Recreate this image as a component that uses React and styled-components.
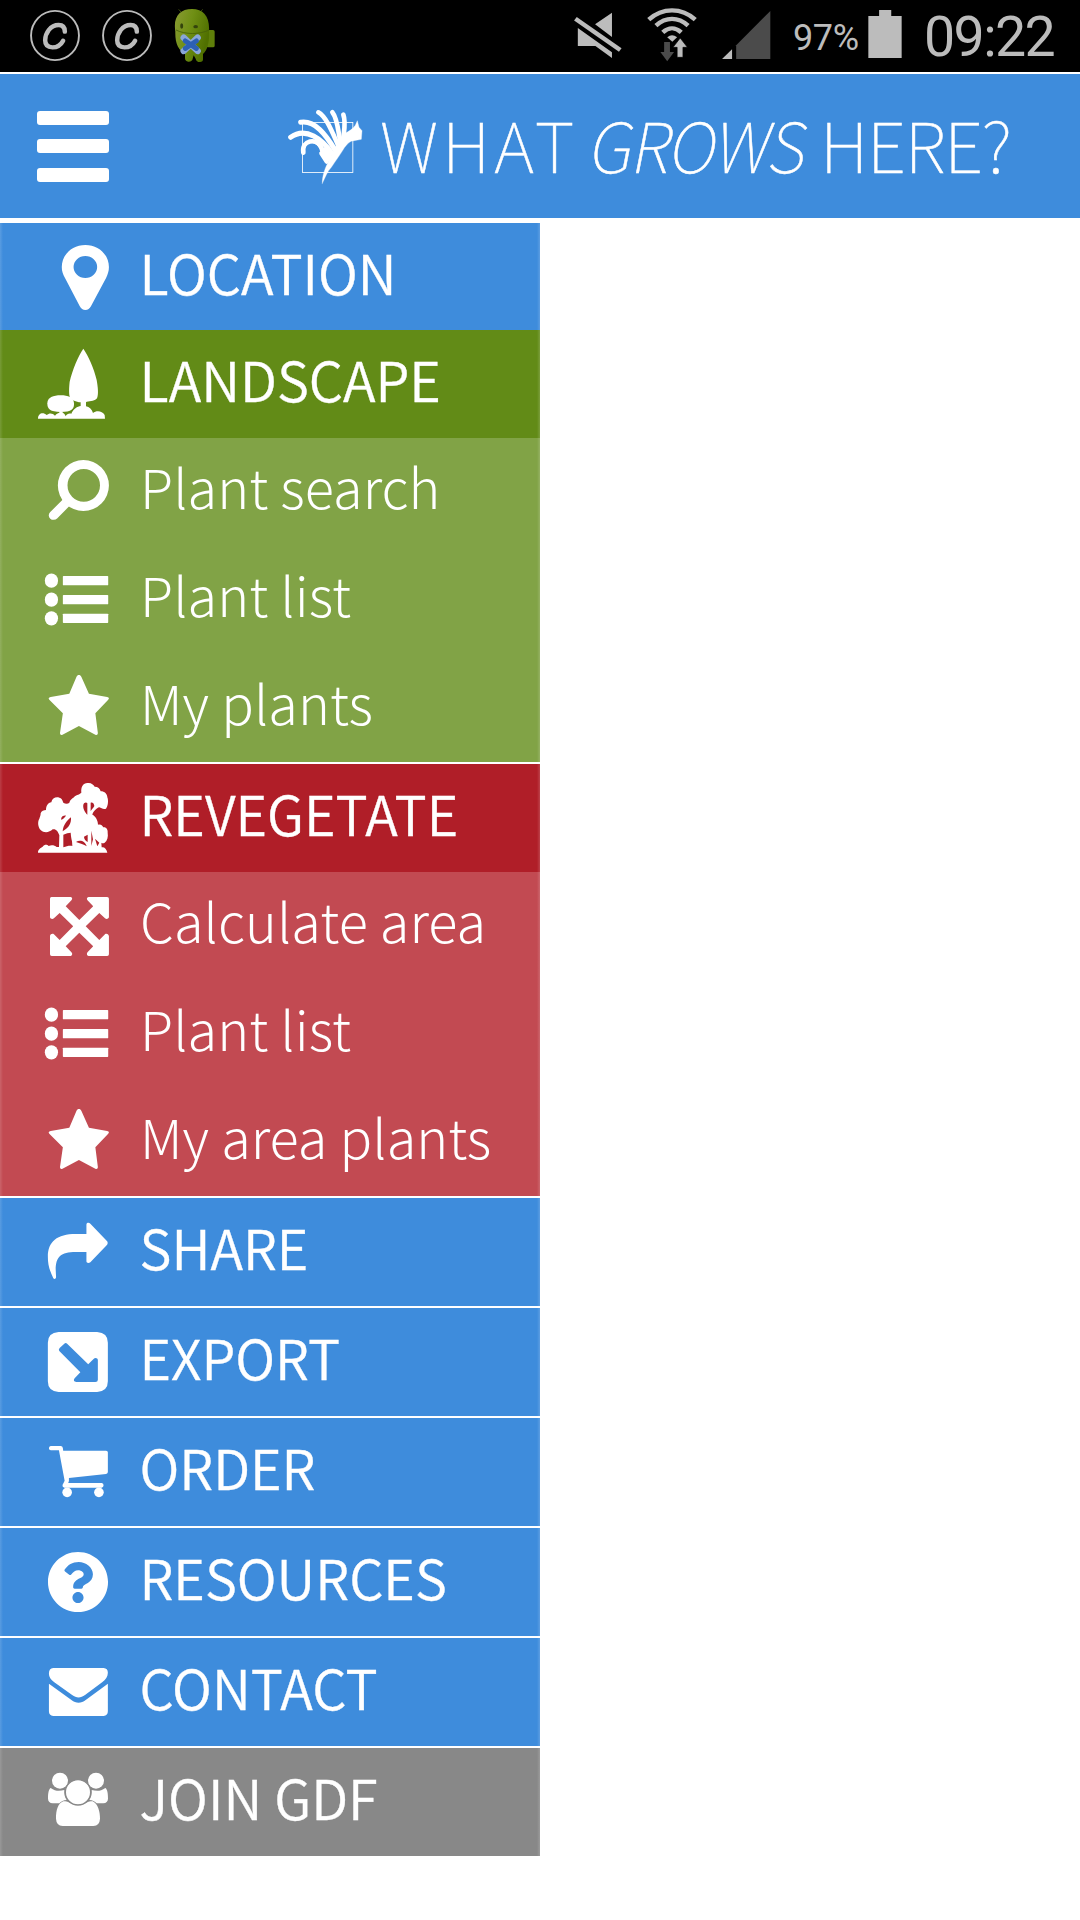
import React from 'react';
import styled, { createGlobalStyle, css } from 'styled-components';
import { FaQuestionCircle } from 'react-icons/fa';

const color = {
  blue: '#3e8cdc',
  green: '#628b17',
  greenSoft: '#81a346',
  red: '#b01e28',
  redSoft: '#c24a52',
  grey: '#888888',
  status: '#bcbcbc',
  statusDim: '#4b4b4b',
};

const GlobalStyle = createGlobalStyle`
  * { box-sizing: border-box; }
  body { margin: 0; background: #fff; }
  svg { display: block; flex: none; }
`;

const Screen = styled.div`
  width: 1080px;
  height: 1920px;
  overflow: hidden;
  background: #fff;
  font-family: "Noto Sans CJK JP", "Noto Sans", sans-serif;
`;

const StatusBar = styled.div`
  display: flex;
  justify-content: space-between;
  height: 72px;
  padding: 0 25px 0 30px;
  background: #000;
  color: ${color.status};
  font-family: Roboto, sans-serif;
`;

const StatusGroup = styled.div`
  display: flex;
  gap: ${p => p.$gap}px;
`;

const StatusIcon = styled.svg`
  width: ${p => p.$width}px;
  height: 72px;
`;

const BatteryLevel = styled.span`
  width: 68px;
  line-height: 77px;
  font-size: 36px;
  letter-spacing: -0.4px;
`;

const Clock = styled.span`
  width: 131px;
  font-size: 55.5px;
  font-weight: 400;
  line-height: 75px;
  letter-spacing: -1.6px;
  white-space: nowrap;
`;

const Header = styled.header`
  display: flex;
  align-items: center;
  height: 144px;
  margin: 2px 0 5px;
  padding-left: 37px;
  background: ${color.blue};
  color: #fff;
`;

const MenuButton = styled.button`
  display: flex;
  flex-direction: column;
  justify-content: space-between;
  width: 72px;
  height: 71px;
  margin: 0 177px 0 0;
  padding: 0;
  border: 0;
  background: none;
`;

const MenuBar = styled.span`
  height: 14px;
  border-radius: 3px;
  background: #fff;
`;

const Brand = styled.h1`
  display: flex;
  margin: 0;
  padding-bottom: 6px;
  font-size: 69px;
  font-weight: 100;
  line-height: 138px;
  white-space: nowrap;
`;

const Word = styled.span`
  width: ${p => p.$width}px;
  letter-spacing: ${p => p.$tracking}px;
  -webkit-text-stroke: 0.5px #fff;
  ${p => p.$slanted && css`
    transform: skewX(-11deg) scaleX(0.955);
    transform-origin: 0 70%;
  `}
`;

const Logo = styled.svg`
  width: 84px;
  height: 80px;
  margin-right: 10px;
`;

const Menu = styled.nav`
  width: 540px;
`;

const Row = styled.div`
  display: flex;
  height: ${p => p.$height || 108}px;
  margin-bottom: ${p => (p.$divided ? 2 : 0)}px;
  background:
    linear-gradient(90deg, rgba(255, 255, 255, 0.14), transparent 3px, transparent 537px, rgba(255, 255, 255, 0.16)),
    ${p => p.$color};
  color: #fff;
`;

const IconCell = styled.div`
  display: flex;
  justify-content: flex-end;
  align-items: center;
  width: 120px;
  height: 108px;
  padding-right: ${p => p.$inset || 0}px;
`;

const Drawing = styled.svg`
  width: 120px;
  height: 108px;
  fill: #fff;
  fill-rule: evenodd;
`;

const Label = styled.span`
  padding-left: ${p => (p.$light ? 20 : 19.5)}px;
  font-size: 54px;
  font-weight: ${p => (p.$light ? 300 : 350)};
  line-height: ${p => (p.$light ? 96 : 97)}px;
  letter-spacing: ${p => (p.$light ? 0.08 : 0)}px;
  -webkit-text-stroke: ${p => (p.$light ? 0 : 0.35)}px #fff;
  white-space: nowrap;
`;

/* Row icons share a 120x108 cell; `top` is the cell's origin in drawing units. */
function Glyph({ top, children }) {
  return (
    <Drawing viewBox={`0 ${top} 336 324`} preserveAspectRatio="none">{children}</Drawing>
  );
}

const PinIcon = () => (
  <Glyph top={24}>
    <path d="M239 90C276 90 305 119 305 156C305 168 302 178 297 189L255 273C251 281 246 285 239 285C232 285 227 281 223 273L182 189C176 178 173 168 173 156C173 119 202 90 239 90ZM239 123A33 33 0 1 0 239 189A33 33 0 1 0 239 123Z" />
  </Glyph>
);

const GardenIcon = () => (
  <Drawing viewBox="-60 -15 360 324">
    <path d="M190 41C205 62 222 100 230 135C234 158 236 178 231 190C226 197 212 199 200 200L198 202V214C208 216 216 224 219 234C228 226 246 226 254 240L255 251H54C54 236 68 230 80 240C88 233 98 234 105 242C110 235 116 234 118 233V230H128V233C134 236 136 240 137 244C140 236 148 234 154 236C160 222 172 214 182 213V202C168 200 155 196 150 188C146 178 147 158 149 140C157 105 175 62 190 41Z" />
    <path d="M82 205C82 188 100 181 122 181C145 181 160 188 162 204C163 222 155 231 122 231C90 231 82 222 82 205Z" />
  </Drawing>
);

const SearchIcon = () => (
  <Glyph top={669}>
    <path d="M162 811.5A71.5 76.5 0 1 1 305 811.5A71.5 76.5 0 1 1 162 811.5ZM189 811A45.5 49 0 1 0 280 811A45.5 49 0 1 0 189 811Z" />
    <path d="M150 901L190 858" stroke="#fff" strokeWidth="27" strokeLinecap="round" />
  </Glyph>
);

const ListIcon = () => (
  <Glyph top={18}>
    {[122, 179, 235].map(y => (
      <React.Fragment key={y}>
        <ellipse cx="144" cy={y} rx="18.5" ry="21.5" />
        <rect x="176" y={y - 14} width="127" height="28" rx="2" />
      </React.Fragment>
    ))}
  </Glyph>
);

const StarIcon = () => (
  <Glyph top={342}>
    <path d="M221 405C224 405 226 407 228 411L249 461L300 471C306 472 306 476 303 479L267 520L274 579C274 584 271 586 267 584L221 558L175 584C171 586 168 584 168 579L176 520L138 479C135 476 136 472 142 471L194 461L214 411C216 407 218 405 221 405Z" />
  </Glyph>
);

const ForestIcon = () => (
  <Drawing viewBox="-60 -18 360 324">
    <path d="M54 248C54 238 62 234 68 230C74 222 82 224 86 228C95 224 104 226 110 231L117 231L118 196C114 184 108 176 98 178C88 188 72 190 62 180C54 172 52 155 58 146C60 140 62 136 62 130C64 122 72 120 78 120C78 108 84 98 94 97C96 84 108 80 118 83C126 84 128 92 130 98C136 102 144 102 148 98C150 90 156 86 162 82C166 74 176 76 184 68C182 50 190 38 204 39C214 38 220 44 224 50C234 50 240 56 242 64C254 64 262 72 262 82C266 92 264 108 258 116C250 120 244 114 238 112C230 114 220 124 217 134C226 138 234 150 234 164C244 162 248 168 250 172C258 170 264 178 263 188C265 200 262 212 254 218C250 220 246 220 244 218L245 232C252 230 260 236 262 248Z
      M128 184C130 165 140 152 153 142C154 160 148 172 128 184Z
      M123 149C124 138 132 136 138 137C134 142 130 148 123 149Z
      M190 104C192 96 200 96 202 100L202 134C194 126 188 114 190 104Z
      M212 98C216 96 222 98 223 108C220 114 214 118 212 124Z
      M130 232L130 194C138 190 146 188 152 188C153 200 154 206 156 214L157 228C150 226 140 228 130 232Z
      M168 216C180 208 196 214 200 229C192 222 180 221 168 216Z
      M192 200L203 194L203 216C196 212 192 206 192 200Z
      M214 182L219 208L214 228Z
      M225 206L238 218L232 229Z" />
  </Drawing>
);

const ExpandIcon = () => (
  <Glyph top={36}>
    <path d="M144 111H198C203 112 203 117 200 121L184 139L222 180L261 139L245 121C242 117 243 112 248 111H300Q305 111 305 116V172C303 178 297 178 294 175L278 159L240 199L278 240L294 223C298 220 303 222 305 228V283Q305 288 300 288H248C243 287 242 281 245 277L261 259L222 218L184 259L200 277C204 281 202 287 198 288H145Q140 288 140 283V228C141 222 147 220 151 223L167 240L205 199L167 159L151 175C147 179 141 177 140 172V116Q140 111 144 111Z" />
  </Glyph>
);

const ShareIcon = () => (
  <Glyph top={24}>
    <path d="M242 104C242 98 249 97 253 101L300 154Q303 159 300 164L253 217C248 221 242 219 242 214V186H212C170 186 156 200 156 240L157 262C156 268 151 268 149 264C138 240 134 222 134 200C134 155 160 132 212 132H242Z" />
  </Glyph>
);

const ExportIcon = () => (
  <Glyph top={354}>
    <path d="M164 426H272Q302 428 302 458V574Q302 604 272 606H164Q134 604 134 574V458Q134 428 164 426ZM180 461L167 474Q163 478 166 483L225 547L209 565C205 570 207 576 214 576H267Q274 576 274 569V510C274 504 266 502 262 507L247 523L188 461Q184 457 180 461Z" />
  </Glyph>
);

const CartIcon = () => (
  <Glyph top={684}>
    <path d="M142 768H170Q175 768 176 774L177 782H297Q302 782 302 787V846Q302 851 297 852L193 864V873L191 879H285Q290 880 290 886Q290 892 285 893H180Q174 892 175 885L181 872L165 781H142Q136 780 137 775Q137 769 142 768Z" />
    <ellipse cx="188" cy="907" rx="13.5" ry="14.5" />
    <ellipse cx="277" cy="907" rx="13.5" ry="14.5" />
  </Glyph>
);

const MailIcon = () => (
  <Glyph top={354}>
    <path d="M149 444H290Q302 445 302 458C302 470 296 479 286 487L238 525C226 535 214 535 202 525L152 487C142 478 137 471 137 461Q137 445 149 444Z" />
    <path d="M137 491L200 540C213 551 227 551 240 540L302 491V574Q302 587 290 588H149Q137 587 137 574Z" />
  </Glyph>
);

const PeopleIcon = () => (
  <Drawing viewBox="-60 24 360 324">
    <circle cx="120" cy="122" r="24" />
    <circle cx="228" cy="122" r="24" />
    <path d="M92 144C108 156 122 152 133 150C132 162 134 172 140 180C130 180 124 184 118 190H98Q85 189 84 176C84 160 86 148 92 144Z" />
    <path d="M256 144C240 156 226 152 215 150C216 162 214 172 208 180C218 180 224 184 230 190H250Q263 189 264 176C264 160 262 148 256 144Z" />
    <path d="M130 184C140 182 146 186 152 190C166 197 182 197 196 190C202 186 208 182 218 184C234 192 240 215 240 236Q239 257 220 258H128Q109 257 108 236C108 210 114 190 130 184Z" />
    <circle cx="174" cy="157" r="38" stroke={color.grey} strokeWidth="4" />
  </Drawing>
);

const FlowerLogo = () => (
  <Logo viewBox="48 48 252 240" fill="none" stroke="#fff" strokeLinecap="round">
    <rect x="97.500" y="97.500" width="151" height="150" strokeWidth="2.500" />
    <path d="M145 67C168 80 184 120 204 165" strokeWidth="14" />
    <path d="M187 67C202 85 204 120 211 155" strokeWidth="14" />
    <path d="M220 74C228 95 222 125 220 145" strokeWidth="14" />
    <path d="M92 97C135 90 168 135 194 178" strokeWidth="15" />
    <path d="M62 142C108 108 158 150 186 190" strokeWidth="15" />
    <path d="M100 188C94 150 140 142 154 172C158 190 164 200 174 208" strokeWidth="14" />
    <path d="M110 160C118 152 140 152 152 174" strokeWidth="8" />
    <path d="M154 190L170 215M165 178L178 200" strokeWidth="13" />
    <path d="M157 280C156 262 164 235 174 218C186 190 200 160 222 132C236 124 248 118 256 106L262 92L267 112L276 122L274 148L252 152C240 152 232 162 224 172C212 192 196 214 184 232C172 244 166 262 157 280Z" fill="#fff" strokeWidth="1" />
  </Logo>
);

const CopyrightBadge = () => (
  <StatusIcon $width={50} viewBox="87 0 145 216" preserveAspectRatio="none" fill="none" stroke={color.status}>
    <ellipse cx="159.500" cy="106.500" rx="69.500" ry="74" strokeWidth="5.500" />
    <path d="M188 95C188 80 181 75 170 75C146 75 131 100 131 121C131 136 140 142 152 142C166 142 177 134 183 122" strokeWidth="13" strokeLinecap="round" />
  </StatusIcon>
);

const AndroidBadge = () => (
  <StatusIcon $width={44} viewBox="41 0 132 216">
    <defs>
      <linearGradient id="droid" x1="0" y1="0" x2="1" y2="0.4">
        <stop offset="0" stopColor="#8a9c34" />
        <stop offset="0.5" stopColor="#6f8f14" />
        <stop offset="1" stopColor="#507000" />
      </linearGradient>
    </defs>
    <path d="M55 28L62 36M127 28L120 36" stroke="#3c4c10" strokeWidth="3" />
    <rect x="138" y="90" width="25" height="52" rx="5" fill="#5f7f0a" />
    <path d="M45 95C38 50 58 27 95 27C130 27 149 50 146 94C148 125 142 150 128 162V178Q128 186 119 186Q108 186 106 176L100 166L96 180Q92 186 84 185Q74 184 74 174V162C54 150 44 130 45 95Z" fill="url(#droid)" />
    <path d="M47 90C75 104 118 104 146 90" fill="none" stroke="#465f0a" strokeWidth="2.500" />
    <ellipse cx="64" cy="78" rx="4.500" ry="8" fill="#34440c" />
    <ellipse cx="106" cy="80" rx="7" ry="5" fill="#34440c" />
    <path d="M70 113L112 153M112 113L70 153" stroke="#8aa6d8" strokeWidth="19" strokeLinecap="round" />
    <path d="M75 123L108 145M108 123L75 145" stroke="#2c60b4" strokeWidth="15" strokeLinecap="round" />
  </StatusIcon>
);

const MuteIcon = () => (
  <StatusIcon $width={50} viewBox="102 0 145 216" preserveAspectRatio="none" fill={color.status}>
    <path d="M215 38V111L166 73ZM116 84L215 157V174L167 138H116Z" />
    <path d="M109 56L239 150" stroke={color.status} strokeWidth="13" />
  </StatusIcon>
);

const WifiIcon = () => (
  <StatusIcon $width={52} viewBox="316 0 152 216" preserveAspectRatio="none" fill="none" stroke={color.status}>
    <path d="M324 59C364 22 420 22 460 59M345 77C374 50 410 50 439 77M365 97C382 81 402 81 419 97" strokeWidth="13" />
    <path d="M378 112Q392 99 407 112L393 125Z" fill={color.status} stroke="none" />
    <path d="M369 126H386V156H398L378 184L358 156H369Z" fill={color.statusDim} stroke="none" />
    <path d="M416 114L437 142H424V172H407V142H395Z" fill={color.status} stroke="#000" strokeWidth="2" />
  </StatusIcon>
);

const SignalIcon = () => (
  <StatusIcon $width={50} viewBox="528 0 145 216" preserveAspectRatio="none">
    <path d="M671 33V177H572V136Z" fill={color.statusDim} />
    <path d="M560 148V177H531Z" fill={color.status} />
  </StatusIcon>
);

const BatteryIcon = () => (
  <StatusIcon $width={34} viewBox="957 0 98 216" preserveAspectRatio="none" fill={color.status}>
    <path d="M989 30H1024V48H1054V174H958V48H989Z" />
  </StatusIcon>
);

const items = [
  { label: 'LOCATION', Icon: PinIcon, fill: color.blue, height: 107 },
  { label: 'LANDSCAPE', Icon: GardenIcon, fill: color.green },
  { label: 'Plant search', Icon: SearchIcon, fill: color.greenSoft, light: true },
  { label: 'Plant list', Icon: ListIcon, fill: color.greenSoft, light: true },
  { label: 'My plants', Icon: StarIcon, fill: color.greenSoft, light: true, divided: true },
  { label: 'REVEGETATE', Icon: ForestIcon, fill: color.red },
  { label: 'Calculate area', Icon: ExpandIcon, fill: color.redSoft, light: true },
  { label: 'Plant list', Icon: ListIcon, fill: color.redSoft, light: true },
  { label: 'My area plants', Icon: StarIcon, fill: color.redSoft, light: true, divided: true },
  { label: 'SHARE', Icon: ShareIcon, fill: color.blue, divided: true },
  { label: 'EXPORT', Icon: ExportIcon, fill: color.blue, divided: true },
  { label: 'ORDER', Icon: CartIcon, fill: color.blue, divided: true },
  { label: 'RESOURCES', Icon: FaQuestionCircle, size: 62, inset: 11, fill: color.blue, divided: true },
  { label: 'CONTACT', Icon: MailIcon, fill: color.blue, divided: true },
  { label: 'JOIN GDF', Icon: PeopleIcon, fill: color.grey },
];

export default function App() {
  return (
    <Screen>
      <GlobalStyle />
      <StatusBar>
        <StatusGroup $gap={22}>
          <CopyrightBadge />
          <CopyrightBadge />
          <AndroidBadge />
        </StatusGroup>
        <StatusGroup $gap={22}>
          <StatusGroup $gap={23}>
            <MuteIcon />
            <WifiIcon />
            <SignalIcon />
          </StatusGroup>
          <StatusGroup $gap={7}>
            <BatteryLevel>97%</BatteryLevel>
            <BatteryIcon />
          </StatusGroup>
          <Clock>09:22</Clock>
        </StatusGroup>
      </StatusBar>
      <Header>
        <MenuButton aria-label="Menu">
          <MenuBar />
          <MenuBar />
          <MenuBar />
        </MenuButton>
        <FlowerLogo />
        <Brand>
          <Word $width={207} $tracking={4}>WHAT</Word>
          <Word $width={233} $tracking={-1.2} $slanted>GROWS</Word>
          <Word $width={190} $tracking={-1.1}>HERE?</Word>
        </Brand>
      </Header>
      <Menu>
        {items.map(({ label, Icon, fill, height, light, divided, size, inset }, i) => (
          <Row key={i} $color={fill} $height={height} $divided={divided}>
            <IconCell $inset={inset}>
              <Icon size={size} />
            </IconCell>
            <Label $light={light}>{label}</Label>
          </Row>
        ))}
      </Menu>
    </Screen>
  );
}
